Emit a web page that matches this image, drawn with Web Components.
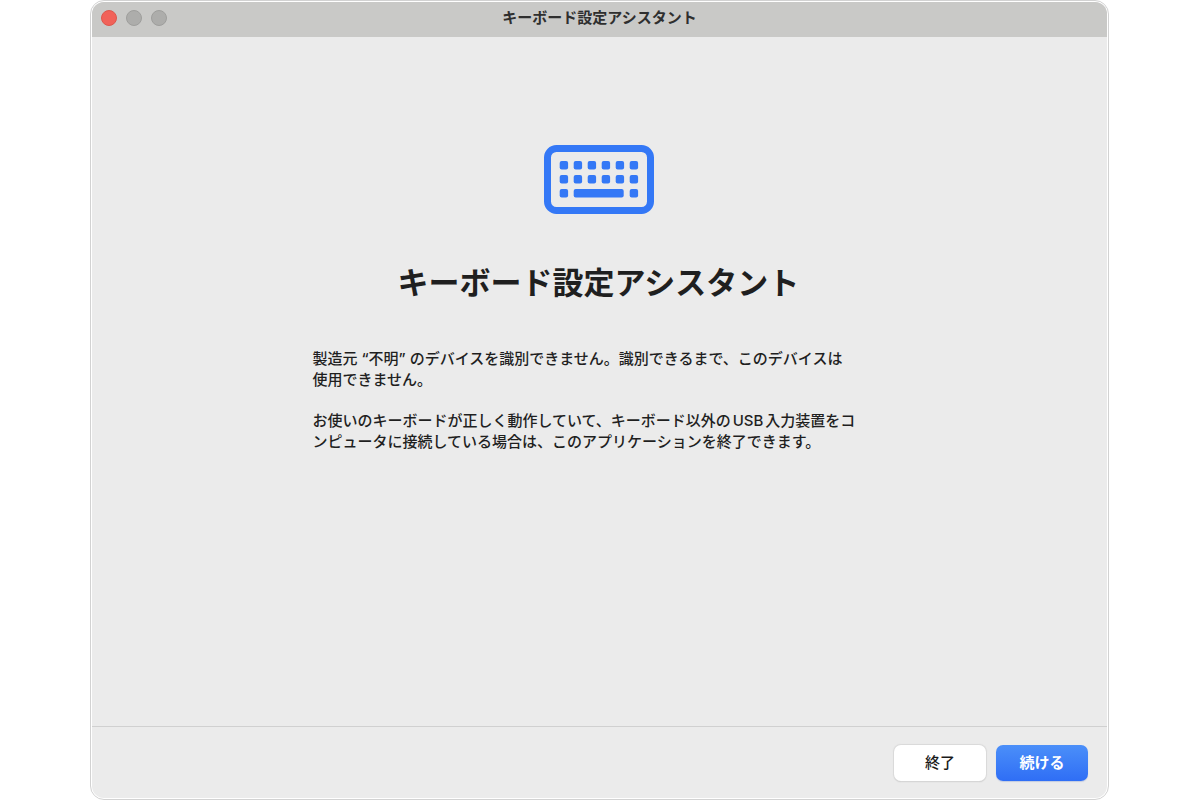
<!DOCTYPE html>
<html lang="ja">
<head>
<meta charset="utf-8">
<meta name="viewport" content="width=device-width, initial-scale=1">
<title>キーボード設定アシスタント</title>
<style>
  body {
    margin: 0;
    background: #fff;
    color: #1f1f1f;
    font-family: Inter, "Noto Sans CJK JP", sans-serif;
    text-autospace: normal;
  }
</style>
</head>
<body>
<app-window>
  <title-bar slot="title">キーボード設定アシスタント</title-bar>
  <assistant-page>
    <keyboard-icon slot="icon"></keyboard-icon>
    <span slot="heading">キーボード設定アシスタント</span>
    <message-text>製造元 “不明” のデバイスを識別できません。識別できるまで、このデバイスは<br>使用できません。</message-text>
    <message-text>お使いのキーボードが正しく動作していて、キーボード以外のUSB入力装置をコ<br>ンピュータに接続している場合は、このアプリケーションを終了できます。</message-text>
  </assistant-page>
  <action-bar slot="actions">
    <push-button>終了</push-button>
    <push-button primary>続ける</push-button>
  </action-bar>
</app-window>
<script>
  const define = (name, markup, setup) => {
    const template = document.createElement('template');
    template.innerHTML = markup;
    customElements.define(name, class extends HTMLElement {
      constructor() {
        super();
        this.attachShadow({ mode: 'open' }).append(template.content.cloneNode(true));
        if (setup) setup(this.shadowRoot, this);
      }
    });
  };

  define('app-window', `
    <style>
      :host { display: flex; box-sizing: border-box; min-height: 100vh; padding: 0 91px 0 90px; }
      .frame {
        flex: 1; display: flex; flex-direction: column; box-sizing: border-box;
        border: 1px solid #d2d2d2; border-radius: 14px; background: #fff; padding: 1px;
      }
      .surface {
        flex: 1; display: flex; flex-direction: column;
        border-radius: 12px; overflow: hidden; background: #ebebeb;
      }
      main { flex: 1; display: flex; flex-direction: column; }
    </style>
    <div class="frame"><div class="surface">
      <slot name="title"></slot>
      <main><slot></slot></main>
      <slot name="actions"></slot>
    </div></div>`);

  define('title-bar', `
    <style>
      :host {
        display: grid; grid-template-columns: 1fr auto 1fr; align-items: center;
        box-sizing: border-box; height: 35px; padding: 0 9px 3px; background: #c9c9c7; color: #2f2f2f;
      }
      .lights { display: flex; gap: 9px; }
      button {
        box-sizing: border-box; width: 16px; height: 16px; padding: 0;
        border: 1px solid #9e9e9c; border-radius: 50%; background: #adadab;
      }
      .close { border-color: #dc574d; background: #f16259; }
      .text { font-size: 15px; line-height: 20px; font-weight: 700; }
    </style>
    <div class="lights">
      <button class="close" type="button" aria-label="閉じる"></button>
      <button type="button" aria-label="しまう" disabled></button>
      <button type="button" aria-label="拡大" disabled></button>
    </div>
    <div class="text"><slot></slot></div>`);

  define('keyboard-icon', `
    <style>
      :host { display: block; }
      svg { display: block; width: 110px; height: 69px; fill: #3478f6; }
    </style>
    <svg viewBox="0 0 110 69" aria-hidden="true">
      <rect x="3.5" y="3.5" width="103" height="62" rx="9" fill="none" stroke="#3478f6" stroke-width="7"/>
      <g class="keys"></g>
      <rect x="29.7" y="44" width="50" height="8.4" rx="2"/>
    </svg>`, root => {
      const keys = root.querySelector('.keys');
      for (let row = 0; row < 3; row++) {
        for (let col = 0; col < 6; col++) {
          if (row === 2 && col > 0 && col < 5) continue;
          const key = document.createElementNS('http://www.w3.org/2000/svg', 'rect');
          const box = { x: 15.7 + col * 14, y: 16 + row * 14, width: 8.4, height: 8.4, rx: 2 };
          for (const [k, v] of Object.entries(box)) key.setAttribute(k, v);
          keys.append(key);
        }
      }
    });

  define('assistant-page', `
    <style>
      :host { display: flex; flex-direction: column; align-items: center; padding: 108px 26px 24px 24px; }
      h1 { margin: 45px 0 41px; font-size: 31px; line-height: 48px; font-weight: 700; }
      .messages { display: flex; flex-direction: column; gap: 20px; width: 100%; max-width: 572px; }
    </style>
    <slot name="icon"></slot>
    <h1><slot name="heading"></slot></h1>
    <div class="messages"><slot></slot></div>`);

  define('message-text', `
    <style>
      :host { display: block; }
      p { margin: 0; font-size: 15px; line-height: 21px; font-weight: 500; }
    </style>
    <p><slot></slot></p>`);

  define('action-bar', `
    <style>
      :host {
        display: flex; justify-content: flex-end; gap: 10px;
        padding: 18px 19px 17px; border-top: 1px solid #d0d0d0;
      }
    </style>
    <slot></slot>`);

  define('push-button', `
    <style>
      :host { display: block; }
      button {
        display: block; box-sizing: border-box; min-width: 92px; height: 36px; padding: 0 16px;
        border: 0; border-radius: 7px; background: #fff; color: #1a1a1a;
        font: inherit; font-size: 15px; line-height: 20px; font-weight: 500;
        box-shadow: 0 0 1px 1px #d9d9d9, 0 1px 1px #bdbdbd;
      }
      :host([primary]) button {
        background: linear-gradient(#4b8ff9, #2f6ef5); color: #fff; font-weight: 700;
        box-shadow: 0 1px 1px #c3cbe0;
      }
    </style>
    <button type="button"><slot></slot></button>`);
</script>
</body>
</html>
